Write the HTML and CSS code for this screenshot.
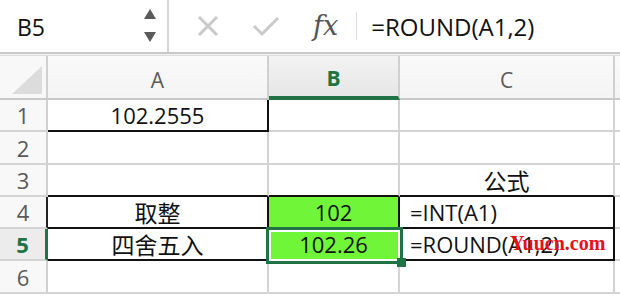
FILE: index.html
```html
<!DOCTYPE html>
<html>
<head>
<meta charset="utf-8">
<link rel="stylesheet" href="styles.css">
</head>
<body>
<div class="app">
  <div class="fbar">
    <div class="namebox">
      <span class="ref">B5</span>
      <span class="spin">
        <svg width="14" height="36" viewBox="0 0 14 36"><polygon points="7,1 13,11 1,11" fill="#5a5a5a"/><polygon points="1,24 13,24 7,34" fill="#5a5a5a"/></svg>
      </span>
    </div>
    <div class="tools">
      <svg class="ic-x" width="22" height="22" viewBox="0 0 22 22"><path d="M2 2 L20 20 M20 2 L2 20" stroke="#c9c9c9" stroke-width="3" fill="none"/></svg>
      <svg class="ic-ok" width="28" height="22" viewBox="0 0 28 22"><path d="M2 11 L10 19 L26 3" stroke="#c9c9c9" stroke-width="3" fill="none"/></svg>
      <span class="fx">fx</span>
      <span class="sep"></span>
    </div>
    <div class="formula">=ROUND(A1,2)</div>
  </div>
  <div class="strip"></div>
  <div class="sheet">
    <div class="corner"><span class="tri"></span></div>
    <div class="ch">A</div>
    <div class="ch sel">B</div>
    <div class="ch">C</div>
    <div class="ch rest"></div>

    <div class="rh">1</div>
    <div class="c ctr bR bB">102.2555</div>
    <div class="c"></div>
    <div class="c"></div>
    <div class="c rest"></div>

    <div class="rh">2</div>
    <div class="c"></div>
    <div class="c"></div>
    <div class="c"></div>
    <div class="c rest"></div>

    <div class="rh">3</div>
    <div class="c bB"></div>
    <div class="c bB"></div>
    <div class="c ctr cjk bB">公式</div>
    <div class="c rest"></div>

    <div class="rh bRk">4</div>
    <div class="c ctr cjk bR bB">取整</div>
    <div class="c ctr green bR bB">102</div>
    <div class="c left bR bB">=INT(A1)</div>
    <div class="c rest"></div>

    <div class="rh selr">5</div>
    <div class="c ctr cjk bR bB">四舍五入</div>
    <div class="c ctr green bR bB">102.26</div>
    <div class="c left bR bB">=ROUND(A1,2)<span class="wm">Yuucn.com</span></div>
    <div class="c rest"></div>

    <div class="rh">6</div>
    <div class="c"></div>
    <div class="c"></div>
    <div class="c"></div>
    <div class="c rest"></div>

    <div class="selbox"><span class="handle"></span></div>
  </div>
</div>
</body>
</html>
```
FILE: styles.css
```css
* { box-sizing: border-box; }
html, body { margin: 0; padding: 0; background: #fff; }
body { width: 620px; height: 300px; overflow: hidden; font-family: "Open Sans", "Noto Sans CJK SC", sans-serif; }

.fbar { height: 52px; display: flex; align-items: stretch; background: #fff; }
.namebox { width: 169px; border-right: 2px solid #d6d6d6; display: flex; align-items: center; justify-content: space-between; padding: 0 10px 0 17px; }
.ref { font-size: 23px; color: #111; margin-top: 2px; }
.spin { display: flex; align-items: center; }
.tools { display: flex; align-items: center; padding-left: 28px; }
.ic-x { margin-right: 33px; }
.ic-ok { margin-right: 33px; }
.fx { font-family: "DejaVu Serif", "Liberation Serif", serif; font-style: italic; font-size: 27px; color: #555; margin-top: -2px; }
.sep { width: 1px; height: 28px; background: #ddd; margin-left: 18px; }
.formula { font-size: 24px; color: #111; display: flex; align-items: center; padding-left: 14px; margin-top: 1px; }

.strip { height: 4px; border-top: 2px solid #c9c9c9; border-bottom: 1px solid #dedede; background: #f2f2f2; }

.sheet { position: relative; display: grid; grid-template-columns: 48px 221px 131px 215px 1fr; grid-template-rows: 44px 32px 33px 32px 32px 32px 33px; }
.corner { background: #f8f8f8; border-right: 2px solid #d0d0d0; border-bottom: 2px solid #c8c8c8; position: relative; }
.tri { position: absolute; right: 4px; bottom: 4px; width: 0; height: 0; border-left: 30px solid transparent; border-bottom: 28px solid #dcdcdc; }
.ch { background: linear-gradient(#fafafa, #f4f4f4); border-right: 2px solid #d0d0d0; border-bottom: 2px solid #c8c8c8; display: flex; align-items: center; justify-content: center; font-size: 21px; color: #5a5a5a; padding-top: 6px; }
.ch.sel { background: linear-gradient(#f3f3f3, #e6e6e6); color: #217346; font-weight: 700; border-bottom: 4px solid #217346; padding-top: 4px; }
.ch.rest { border-right: none; }
.rh { background: #f8f8f8; border-right: 2px solid #d0d0d0; border-bottom: 2px solid #d4d4d4; display: flex; align-items: center; justify-content: center; font-size: 22px; color: #5a5a5a; }
.rh.bRk { border-right-color: #222; }
.rh.selr { background: #ececec; color: #217346; font-weight: 700; border-right: 3px solid #217346; }
.c { border-right: 2px solid #d4d4d4; border-bottom: 2px solid #d4d4d4; font-size: 22px; color: #111; display: flex; align-items: center; position: relative; white-space: nowrap; }
.c.cjk { font-size: 23px; }
.c.rest { border-right: none; }
.ctr { justify-content: center; }
.left { padding-left: 10px; }
.bR { border-right-color: #111; }
.bB { border-bottom-color: #111; }
.green { background: #70f538; }
.wm { position: absolute; left: 110px; top: 3px; font-family: "Liberation Serif", serif; font-weight: 700; font-size: 20px; color: #e8101a; }

.selbox { position: absolute; left: 266px; top: 171px; width: 137px; height: 37px; border: 3px solid #217346; box-shadow: inset 0 0 0 2px #fff; }
.handle { position: absolute; right: -6px; bottom: -6px; width: 9px; height: 9px; background: #217346; }
```
